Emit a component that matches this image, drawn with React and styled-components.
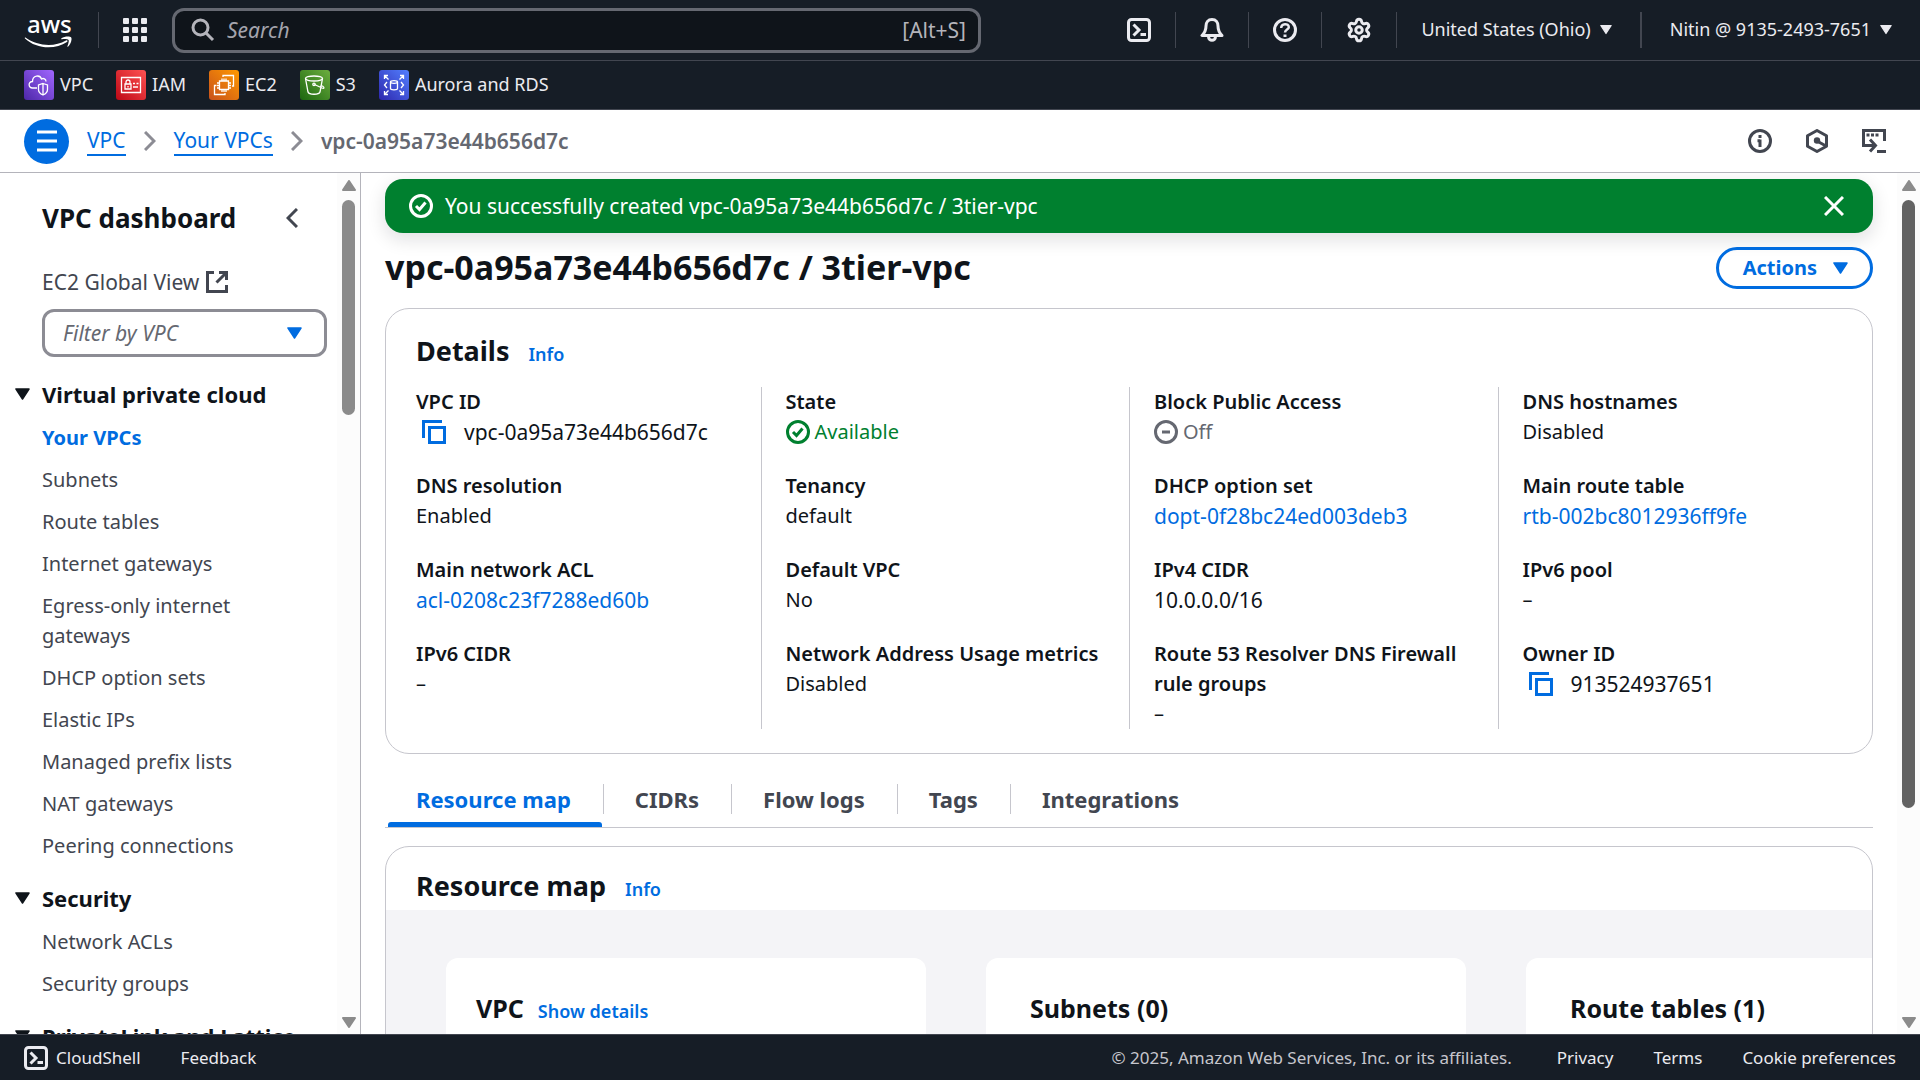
import React from 'react';
import styled, { createGlobalStyle, css } from 'styled-components';
import { Settings } from 'lucide-react';

const c = {
  ink: '#0f141a',
  body: '#424650',
  muted: '#656871',
  blue: '#006ce0',
  green: '#00802f',
  line: '#c6c6cd',
  frame: '#b4b4bb',
  nav: '#161d26',
  navLine: '#424650',
  navText: '#ebebf0',
  canvas: '#f4f4f7',
};

const GlobalStyle = createGlobalStyle`
  *, *::before, *::after { box-sizing: border-box; }
  body {
    margin: 0;
    background: #fff;
    color: ${c.ink};
    font: 400 20px/30px "Noto Sans", "Open Sans", sans-serif;
  }
  h1, h2, h3, p, ul, dl, dd { margin: 0; padding: 0; }
  ul { list-style: none; }
  a { color: inherit; text-decoration: none; }
  button, input, select { font: inherit; color: inherit; }
  svg { display: block; flex: none; }
`;

const Page = styled.div`
  display: flex;
  flex-direction: column;
  height: 100vh;
  overflow: hidden;
`;

const PlainButton = styled.button`
  display: flex;
  align-items: center;
  padding: 0;
  border: 0;
  background: none;
  cursor: pointer;
`;

/* Global navigation */
const TopBar = styled.header`
  display: flex;
  align-items: center;
  flex: none;
  height: 61px;
  padding: 0 28px 0 24px;
  background: ${c.nav};
  color: ${c.navText};
  border-bottom: 1px solid ${c.navLine};
  font-size: 18px;
  line-height: 24px;
`;

const Rule = styled.span`
  flex: none;
  width: ${(p) => (p.$wide ? 2 : 1)}px;
  height: 36px;
  margin: 0 ${(p) => (p.$wide ? 28 : 24)}px;
  background: ${c.navLine};
`;

const SearchBox = styled.label`
  display: flex;
  align-items: center;
  gap: 12px;
  flex: 0 1 809px;
  height: 45px;
  margin: 0 auto 0 25px;
  padding: 0 12px 0 16px;
  border: 3px solid ${c.muted};
  border-radius: 12px;
  background: ${c.ink};
  color: #b4b4bb;
  font-size: 21px;

  input {
    flex: 1;
    min-width: 0;
    padding: 0;
    border: 0;
    outline: 0;
    background: none;
  }
  input::placeholder { color: #a4a4ad; font-style: italic; opacity: 1; }
`;

const Menu = styled(PlainButton)`
  gap: 9px;
  padding-bottom: 2px;
  white-space: nowrap;
`;

const Favorites = styled.nav`
  display: flex;
  align-items: center;
  gap: 23px;
  flex: none;
  height: 49px;
  padding: 0 24px;
  background: ${c.nav};
  border-bottom: 1px solid ${c.navLine};
  color: ${c.navText};
  font-size: 18px;
  line-height: 24px;
`;

const Favorite = styled.a`
  display: flex;
  align-items: center;
  gap: 6px;
`;

const FavoriteLabel = styled.span`
  padding-bottom: 2px;
`;

const Tile = styled.span`
  display: grid;
  place-items: center;
  width: 30px;
  height: 30px;
  border-radius: 3px;
  color: #fff;
  background: linear-gradient(45deg, ${(p) => p.$from}, ${(p) => p.$to});
`;

/* Breadcrumb bar */
const CrumbBar = styled.div`
  display: flex;
  align-items: center;
  gap: 18px;
  flex: none;
  height: 63px;
  padding: 0 34px 0 24px;
  border-bottom: 1px solid ${c.frame};
  color: ${c.body};
  font-size: 21px;
`;

const MenuToggle = styled(PlainButton)`
  justify-content: center;
  width: 45px;
  height: 45px;
  border-radius: 50%;
  background: ${c.blue};
  color: #fff;
`;

const Crumb = styled.a`
  color: ${c.blue};
  line-height: 27px;
  border-bottom: 2px solid ${c.blue};
`;

const CrumbSep = styled.span`
  color: #8c8c94;
`;

const CurrentCrumb = styled.span`
  color: ${c.muted};
  font-weight: 600;
`;

const CrumbTools = styled.div`
  display: flex;
  gap: 33px;
  margin-left: auto;
`;

/* Body */
const Body = styled.div`
  display: flex;
  flex: 1;
  min-height: 0;
`;

const Side = styled.aside`
  display: flex;
  flex: none;
  width: 361px;
  border-right: 1px solid ${c.frame};
`;

const SideScroll = styled.div`
  flex: 1;
  min-width: 0;
  padding: 27px 10px 0 15px;
  overflow: hidden;
  color: ${c.body};
`;

const SideHead = styled.div`
  display: flex;
  align-items: center;
  justify-content: space-between;
  margin-bottom: 31px;
  padding: 0 29px 0 27px;
  color: ${c.ink};

  h2 { font-size: 26px; line-height: 36px; }
  svg { color: ${c.body}; }
`;

const GlobalView = styled.a`
  display: flex;
  align-items: center;
  gap: 7px;
  margin: 0 27px 12px;
  font-size: 21px;
`;

const Filter = styled.div`
  position: relative;
  margin: 0 0 22px 27px;
  color: ${c.blue};

  select {
    appearance: none;
    width: 100%;
    height: 48px;
    padding: 0 48px 0 18px;
    border: 3px solid #8c8c94;
    border-radius: 12px;
    background: #fff;
    color: ${c.muted};
    font-size: 21px;
    font-style: italic;
  }
  svg {
    position: absolute;
    right: 25px;
    top: 18px;
    pointer-events: none;
  }
`;

const Section = styled.section`
  display: flex;
  flex-direction: column;
  gap: 14px;
  margin-bottom: 22px;
`;

const SectionToggle = styled(PlainButton)`
  gap: 12px;
  color: ${c.ink};
  font-size: 22px;
  font-weight: 700;
  white-space: nowrap;
`;

const SideList = styled.ul`
  display: flex;
  flex-direction: column;
  gap: 12px;
  padding: 0 40px 0 27px;
`;

const SideLink = styled.a`
  display: block;
  ${(p) => p.$current && css`color: ${c.blue}; font-weight: 700;`}
`;

/* Scroll tracks */
const Track = styled.div`
  display: flex;
  flex-direction: column;
  align-items: center;
  flex: none;
  width: 23px;
  padding: 7px 0 6px;
  background: #fcfcfc;
  color: #8b8b8b;
`;

const TrackRun = styled.div`
  flex: 1;
  width: 13px;
  margin: 9px 0 7px;
`;

const Thumb = styled.div`
  border-radius: 7px;
  background: ${(p) => p.$color};
`;

/* Main */
const Main = styled.main`
  flex: 1;
  min-width: 0;
  padding: 6px 24px 0 24px;
  overflow: hidden;
`;

const Flash = styled.div`
  display: flex;
  align-items: center;
  gap: 12px;
  height: 54px;
  margin-bottom: 13px;
  padding: 0 29px 0 24px;
  border-radius: 18px;
  background: ${c.green};
  color: #fff;
  font-size: 21px;
  box-shadow: 0 6px 18px 1px rgba(15, 20, 26, 0.12);

  p { flex: 1; }
`;

const TitleRow = styled.div`
  display: flex;
  align-items: center;
  justify-content: space-between;
  margin-bottom: 18px;

  h1 {
    padding-bottom: 2px;
    font-size: 34px;
    line-height: 42px;
  }
`;

const ActionsButton = styled(PlainButton)`
  gap: 16px;
  height: 42px;
  padding: 0 22px 0 24px;
  border: 3px solid ${c.blue};
  border-radius: 24px;
  color: ${c.blue};
  font-weight: 700;
`;

const Panel = styled.section`
  margin-bottom: 18px;
  border: 1px solid ${c.line};
  border-radius: 24px;
  background: #fff;
  overflow: hidden;
`;

const PanelHead = styled.div`
  display: flex;
  align-items: baseline;
  gap: 19px;
  padding: ${(p) => p.$top}px 30px ${(p) => p.$bottom}px;

  h2 { font-size: 27px; line-height: 36px; }
`;

const InfoLink = styled.a`
  color: ${c.blue};
  font-size: 18px;
  line-height: 24px;
  font-weight: 600;
`;

const Columns = styled.div`
  display: grid;
  grid-template-columns: repeat(4, minmax(0, 1fr));
  padding: 0 6px 24px;
`;

const Column = styled.dl`
  display: flex;
  flex-direction: column;
  gap: 24px;
  padding: 0 23px 0 24px;

  & + & { border-left: 1px solid ${c.line}; }
  dt { font-weight: 600; }
`;

const Value = styled.dd`
  display: flex;
  align-items: center;
  gap: ${(p) => (p.$copy ? 18 : 5)}px;
  padding-left: ${(p) => (p.$copy ? 6 : 0)}px;
  color: ${(p) => p.$color || c.ink};
  font-size: ${(p) => (p.$id ? 21 : 20)}px;
  white-space: nowrap;

  a { color: ${c.blue}; }
`;

const CopyButton = styled(PlainButton)`
  color: ${c.blue};
`;

const Tabs = styled.div`
  display: flex;
  align-items: stretch;
  height: 56px;
  margin-bottom: 18px;
  border-bottom: 1px solid ${c.line};
`;

const Tab = styled.button`
  display: flex;
  flex-direction: column;
  padding: 12px 0 0;
  border: 0;
  background: none;
  color: ${(p) => (p.$active ? c.blue : c.body)};
  font-size: 22px;
  font-weight: 700;
  cursor: pointer;

  span {
    padding: 0 32px 0 31px;
    line-height: 30px;
    border-right: 1px solid ${c.line};
  }
  &:last-child span { border-right: 0; }
  &::after {
    content: "";
    align-self: stretch;
    height: 5px;
    margin: 8px 2px 0 3px;
    border-radius: 3px 3px 0 0;
    background: ${(p) => (p.$active ? c.blue : 'transparent')};
  }
`;

const MapCanvas = styled.div`
  display: flex;
  gap: 60px;
  padding: 48px 60px;
  background: ${c.canvas};
  overflow: hidden;
`;

const MapCard = styled.article`
  display: flex;
  align-items: baseline;
  gap: 14px;
  flex: 0 0 480px;
  min-height: 200px;
  padding: 32px ${(p) => (p.$root ? 30 : 44)}px;
  border-radius: 12px;
  background: #fff;

  h3 { font-size: 25px; line-height: 36px; }
`;

/* Footer */
const Footer = styled.footer`
  display: flex;
  align-items: center;
  gap: 40px;
  flex: none;
  height: 46px;
  padding: 0 24px;
  background: ${c.nav};
  border-top: 1px solid ${c.navLine};
  color: ${c.navText};
  font-size: 17px;
  line-height: 24px;
`;

const Legal = styled.span`
  margin-left: auto;
  padding-right: 5px;
  color: ${c.line};
`;

const CloudShellButton = styled(PlainButton)`
  gap: 8px;
`;

/* Icons */
const Stroke = ({ size = 24, w = 3, box = 24, children }) => (
  <svg width={size} height={size} viewBox={`0 0 ${box} ${box}`} fill="none" stroke="currentColor" strokeWidth={w} aria-hidden="true">
    {children}
  </svg>
);

const Caret = ({ w = 15, h = 12 }) => (
  <svg width={w} height={h} viewBox="0 0 15 12" aria-hidden="true">
    <path d="M1 1h13L7.500 11z" fill="currentColor" stroke="currentColor" strokeWidth="1.500" strokeLinejoin="round" />
  </svg>
);

const Arrow = ({ up }) => (
  <svg width="14" height="11" viewBox="0 0 14 11" aria-hidden="true">
    <path d={up ? 'M7 1 13 10H1z' : 'M7 10 13 1H1z'} fill="currentColor" stroke="currentColor" strokeWidth="2" strokeLinejoin="round" />
  </svg>
);

const AwsLogo = () => (
  <svg width="50" height="52" viewBox="0 -12 50 52" role="img" aria-label="AWS">
    <text x="3" y="17" fill="#fff" fontFamily="Noto Sans, sans-serif" fontSize="24" fontWeight="500">aws</text>
    <path d="M1.500 21.500C13 30 30 31.500 42 24.500c1.200-.7 2.200.7 1 1.600C31 34 12 33 1 22.500c-.5-.6 0-1.200.5-1z" fill="#fff" />
    <path d="M37.500 22.200c3-2 8.500-2 9.700-.8 1 1.400-.3 6.600-3 9.200-.5.5-1 .2-.8-.3.800-2 1.800-5.600 1.200-6.400-.7-.9-4.300-.9-6.600-.7-.8.100-1-.6-.5-1z" fill="#fff" />
  </svg>
);

const AppGrid = () => (
  <svg width="24" height="24" viewBox="0 0 24 24" fill="currentColor" aria-hidden="true">
    {[0, 9, 18].map((y) => [0, 9, 18].map((x) => <rect key={`${x}-${y}`} x={x} y={y} width="6" height="6" rx="1" />))}
  </svg>
);

const SearchIcon = () => (
  <Stroke>
    <circle cx="9.500" cy="9.500" r="7.500" />
    <path d="m15 15 7 7" />
  </Stroke>
);

const ShellIcon = () => (
  <Stroke>
    <rect x="1.500" y="1.500" width="21" height="21" rx="3" />
    <path d="m6.500 6.500 5.500 5.500-5.500 5.500M13.500 16.500H19" />
  </Stroke>
);

const BellIcon = () => (
  <Stroke>
    <path d="M12 1.500c-4 0-6 3-6 6.500 0 5-1.500 7-4 9.500h20c-2.500-2.500-4-4.500-4-9.500 0-3.500-2-6.500-6-6.500z" strokeLinejoin="round" />
    <path d="M8.500 18.500c0 5 7 5 7 0" />
  </Stroke>
);

const HelpIcon = () => (
  <Stroke>
    <circle cx="12" cy="12" r="10.500" />
    <path d="M8.200 10c0-5 7.600-5 7.600-.8 0 2.400-3.800 2.400-3.800 5.300" strokeWidth="2.500" />
    <path d="M12 16.500v2.500" />
  </Stroke>
);

const InfoIcon = () => (
  <Stroke>
    <circle cx="12" cy="12" r="10.500" />
    <path d="M12 6v3M12 10.500V18M9.500 11.800H12" />
  </Stroke>
);

const HexIcon = () => (
  <Stroke w={3}>
    <path d="m12 1.500 9.500 5.300v10.400L12 22.500l-9.500-5.300V6.800z" strokeLinejoin="round" />
    <circle cx="12" cy="11.500" r="3.200" fill="currentColor" stroke="none" />
    <path d="m12 12 9 5" />
  </Stroke>
);

const ConsoleIcon = () => (
  <Stroke>
    <path d="M22.500 12V1.500h-21v15h11" />
    <path d="m8 10.500 5.500 6-5.500 6M15 22.500h9" />
    <path d="M4.500 6h3M9 6h3M13.500 6h3" />
  </Stroke>
);

const CheckIcon = () => (
  <Stroke>
    <circle cx="12" cy="12" r="10.500" />
    <path d="m7 12 3.500 3.500L16.500 8.500" />
  </Stroke>
);

const MinusIcon = () => (
  <Stroke>
    <circle cx="12" cy="12" r="10.500" />
    <path d="M8 12h8" />
  </Stroke>
);

const CopyIcon = () => (
  <Stroke>
    <path d="M1.500 18V1.500H20" />
    <rect x="7.500" y="7.500" width="15" height="15" />
  </Stroke>
);

const CloseIcon = () => (
  <Stroke size={20} box={20} w={3}>
    <path d="m1 1 18 18M19 1 1 19" />
  </Stroke>
);

const ExternalIcon = () => (
  <Stroke size={22} box={22} w={3}>
    <path d="M8 1.500H1.500v19h19V14M13 1.500h7.500V9M20 2l-9.500 9.500" />
  </Stroke>
);

const Chevron = ({ left }) => (
  <svg width="12" height="20" viewBox="0 0 12 20" fill="none" stroke="currentColor" strokeWidth="3" aria-hidden="true">
    <path d={left ? 'M11 1 2 10l9 9' : 'm1 1 9 9-9 9'} />
  </svg>
);

const tileArt = {
  vpc: (
    <Stroke size={22} box={22} w={1.300}>
      <path d="M9 14H4.500C0 14 0 7.500 4.500 7.500 4.500 1 12 .5 13.500 5c2-1.200 4.500 0 4.500 2.500" />
      <path d="M15 9.500 19.500 11v4.500c0 3-2 4.500-4.500 5.500-2.500-1-4.500-2.500-4.500-5.500V11zM15 9.500V21" />
    </Stroke>
  ),
  iam: (
    <Stroke size={22} box={22} w={1.300}>
      <path d="M1.500 3.500h19v15h-19zM5 10h6v5H5zM6 10V8c0-2.700 4-2.700 4 0v2M8 12v1.500M13 9.500h2M16.500 9.500h2M13 13h5" />
    </Stroke>
  ),
  ec2: (
    <Stroke size={22} box={22} w={1.300}>
      <path d="M6.500 7h9v8.500h-9zM9 4.500V7M11 4.500V7M13 4.500V7M9 15.500V18M11 15.500V18M13 15.500V18M4 9h2.500M4 11.500h2.500M4 14h2.500M15.500 9H18M15.500 11.500H18M15.500 14H18" />
      <path d="M10 3V1.500h10.500V12H19M3.500 11.500H1.500v9H12V19" />
    </Stroke>
  ),
  s3: (
    <Stroke size={22} box={22} w={1.300}>
      <ellipse cx="10" cy="4.500" rx="8.500" ry="2.500" />
      <path d="M1.500 4.500 4 18c1 3 11 3 12 0l2.500-13.500M10.500 10.500 18 14c2 .8 3 0 .500-2l-2-1" />
      <circle cx="10" cy="10.300" r="1.200" />
    </Stroke>
  ),
  rds: (
    <Stroke size={22} box={22} w={1.300}>
      <path d="M1.500 5V1.500H5M1.500 1.500l4 4M17 1.500h3.500V5M20.500 1.500l-4 4M1.500 17v3.500H5M1.500 20.500l4-4M20.500 17v3.500H17M20.500 20.500l-4-4M4 8 1.500 11 4 14M18 8l2.500 3-2.500 3" />
      <ellipse cx="11" cy="8" rx="3.500" ry="1.300" />
      <path d="M7.500 8v6.500c0 1.700 7 1.700 7 0V8" />
    </Stroke>
  ),
};

/* Content */
const favorites = [
  { id: 'vpc', label: 'VPC', from: '#4d27a8', to: '#a166ff' },
  { id: 'iam', label: 'IAM', from: '#bd0816', to: '#ff5252' },
  { id: 'ec2', label: 'EC2', from: '#c8511b', to: '#ff9900' },
  { id: 's3', label: 'S3', from: '#1b660f', to: '#6cae3e' },
  { id: 'rds', label: 'Aurora and RDS', from: '#2e27ad', to: '#527fff' },
];

const sections = [
  {
    title: 'Virtual private cloud',
    items: ['Your VPCs', 'Subnets', 'Route tables', 'Internet gateways', 'Egress-only internet gateways', 'DHCP option sets', 'Elastic IPs', 'Managed prefix lists', 'NAT gateways', 'Peering connections'],
  },
  { title: 'Security', items: ['Network ACLs', 'Security groups'] },
  { title: 'PrivateLink and Lattice', items: [] },
];

const details = [
  [
    { label: 'VPC ID', value: 'vpc-0a95a73e44b656d7c', kind: 'copy' },
    { label: 'DNS resolution', value: 'Enabled' },
    { label: 'Main network ACL', value: 'acl-0208c23f7288ed60b', kind: 'link' },
    { label: 'IPv6 CIDR', value: '–' },
  ],
  [
    { label: 'State', value: 'Available', kind: 'ok' },
    { label: 'Tenancy', value: 'default' },
    { label: 'Default VPC', value: 'No' },
    { label: 'Network Address Usage metrics', value: 'Disabled' },
  ],
  [
    { label: 'Block Public Access', value: 'Off', kind: 'off' },
    { label: 'DHCP option set', value: 'dopt-0f28bc24ed003deb3', kind: 'link' },
    { label: 'IPv4 CIDR', value: '10.0.0.0/16', kind: 'range' },
    { label: 'Route 53 Resolver DNS Firewall rule groups', value: '–' },
  ],
  [
    { label: 'DNS hostnames', value: 'Disabled' },
    { label: 'Main route table', value: 'rtb-002bc8012936ff9fe', kind: 'link' },
    { label: 'IPv6 pool', value: '–' },
    { label: 'Owner ID', value: '913524937651', kind: 'copy' },
  ],
];

const tabs = ['Resource map', 'CIDRs', 'Flow logs', 'Tags', 'Integrations'];

const DetailValue = ({ value, kind }) => {
  if (kind === 'copy') {
    return <Value $id $copy><CopyButton aria-label={`Copy ${value}`}><CopyIcon /></CopyButton>{value}</Value>;
  }
  if (kind === 'link') return <Value $id><a href="#resource">{value}</a></Value>;
  if (kind === 'range') return <Value $id>{value}</Value>;
  if (kind === 'ok') return <Value $color={c.green}><CheckIcon />{value}</Value>;
  if (kind === 'off') return <Value $color={c.muted}><MinusIcon />{value}</Value>;
  return <Value>{value}</Value>;
};

const ScrollTrack = ({ share, color }) => (
  <Track aria-hidden="true">
    <Arrow up />
    <TrackRun><Thumb $color={color} style={{ height: `${share}%` }} /></TrackRun>
    <Arrow />
  </Track>
);

export default function App() {
  return (
    <Page>
      <GlobalStyle />
      <TopBar>
        <a href="#home"><AwsLogo /></a>
        <Rule />
        <PlainButton aria-label="Services"><AppGrid /></PlainButton>
        <SearchBox>
          <SearchIcon />
          <input type="search" placeholder="Search" aria-label="Search" />
          <span>[Alt+S]</span>
        </SearchBox>
        <PlainButton aria-label="CloudShell"><ShellIcon /></PlainButton>
        <Rule />
        <PlainButton aria-label="Notifications"><BellIcon /></PlainButton>
        <Rule />
        <PlainButton aria-label="Support"><HelpIcon /></PlainButton>
        <Rule />
        <PlainButton aria-label="Settings"><Settings size={26} strokeWidth={2.75} /></PlainButton>
        <Rule />
        <Menu>United States (Ohio)<Caret w={12} h={11} /></Menu>
        <Rule $wide />
        <Menu>Nitin @ 9135-2493-7651<Caret w={12} h={11} /></Menu>
      </TopBar>
      <Favorites aria-label="Favorites">
        {favorites.map((f) => (
          <Favorite key={f.id} href={`#${f.id}`}>
            <Tile $from={f.from} $to={f.to}>{tileArt[f.id]}</Tile>
            <FavoriteLabel>{f.label}</FavoriteLabel>
          </Favorite>
        ))}
      </Favorites>
      <CrumbBar>
        <MenuToggle aria-label="Toggle navigation">
          <Stroke><path d="M2 3h20M2 12h20M2 21h20" /></Stroke>
        </MenuToggle>
        <Crumb href="#vpc">VPC</Crumb>
        <CrumbSep><Chevron /></CrumbSep>
        <Crumb href="#vpcs">Your VPCs</Crumb>
        <CrumbSep><Chevron /></CrumbSep>
        <CurrentCrumb>vpc-0a95a73e44b656d7c</CurrentCrumb>
        <CrumbTools>
          <PlainButton aria-label="Info"><InfoIcon /></PlainButton>
          <PlainButton aria-label="Amazon Q"><HexIcon /></PlainButton>
          <PlainButton aria-label="Console recorder"><ConsoleIcon /></PlainButton>
        </CrumbTools>
      </CrumbBar>
      <Body>
        <Side>
          <SideScroll>
            <SideHead>
              <h2>VPC dashboard</h2>
              <PlainButton aria-label="Close navigation"><Chevron left /></PlainButton>
            </SideHead>
            <GlobalView href="#global">EC2 Global View <ExternalIcon /></GlobalView>
            <Filter>
              <select aria-label="Filter by VPC" defaultValue="">
                <option value="">Filter by VPC</option>
              </select>
              <Caret />
            </Filter>
            {sections.map((s) => (
              <Section key={s.title}>
                <SectionToggle aria-expanded="true"><Caret />{s.title}</SectionToggle>
                <SideList>
                  {s.items.map((item) => (
                    <li key={item}><SideLink href="#nav" $current={item === 'Your VPCs'}>{item}</SideLink></li>
                  ))}
                </SideList>
              </Section>
            ))}
          </SideScroll>
          <ScrollTrack share={26.5} color="#8b8b8b" />
        </Side>
        <Main>
          <Flash role="status">
            <CheckIcon />
            <p>You successfully created vpc-0a95a73e44b656d7c / 3tier-vpc</p>
            <PlainButton aria-label="Dismiss"><CloseIcon /></PlainButton>
          </Flash>
          <TitleRow>
            <h1>vpc-0a95a73e44b656d7c / 3tier-vpc</h1>
            <ActionsButton>Actions<Caret /></ActionsButton>
          </TitleRow>
          <Panel>
            <PanelHead $top={24} $bottom={18}>
              <h2>Details</h2>
              <InfoLink href="#info">Info</InfoLink>
            </PanelHead>
            <Columns>
              {details.map((col) => (
                <Column key={col[0].label}>
                  {col.map((d) => (
                    <div key={d.label}>
                      <dt>{d.label}</dt>
                      <DetailValue {...d} />
                    </div>
                  ))}
                </Column>
              ))}
            </Columns>
          </Panel>
          <Tabs role="tablist">
            {tabs.map((t, i) => (
              <Tab key={t} role="tab" aria-selected={i === 0} $active={i === 0}><span>{t}</span></Tab>
            ))}
          </Tabs>
          <Panel>
            <PanelHead $top={21} $bottom={6}>
              <h2>Resource map</h2>
              <InfoLink href="#info">Info</InfoLink>
            </PanelHead>
            <MapCanvas>
              <MapCard $root>
                <h3>VPC</h3>
                <InfoLink href="#details">Show details</InfoLink>
              </MapCard>
              <MapCard><h3>Subnets (0)</h3></MapCard>
              <MapCard><h3>Route tables (1)</h3></MapCard>
            </MapCanvas>
          </Panel>
        </Main>
        <ScrollTrack share={75} color="#636363" />
      </Body>
      <Footer>
        <CloudShellButton><ShellIcon />CloudShell</CloudShellButton>
        <a href="#feedback">Feedback</a>
        <Legal>© 2025, Amazon Web Services, Inc. or its affiliates.</Legal>
        <a href="#privacy">Privacy</a>
        <a href="#terms">Terms</a>
        <a href="#cookies">Cookie preferences</a>
      </Footer>
    </Page>
  );
}
